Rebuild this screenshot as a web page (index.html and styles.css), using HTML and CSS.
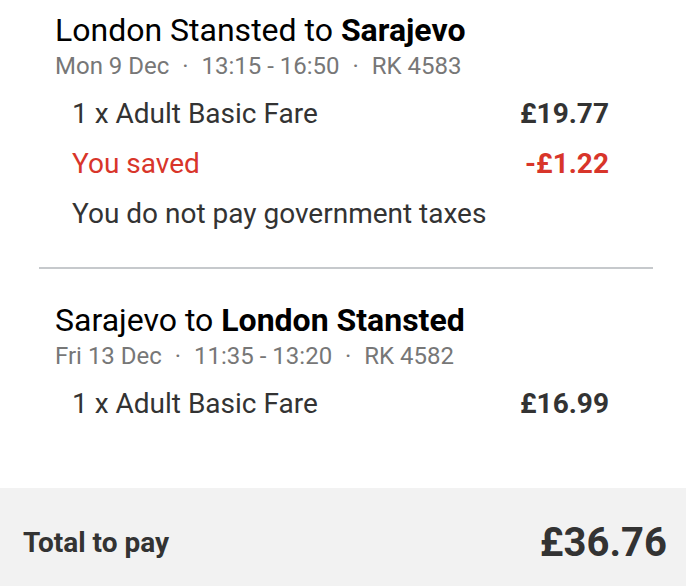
FILE: index.html
```html
<!DOCTYPE html>
<html>
<head>
<meta charset="utf-8">
<link rel="stylesheet" href="styles.css">
</head>
<body>
<div class="summary">
  <section class="trip trip-first">
    <h2 class="route">London Stansted to <b>Sarajevo</b></h2>
    <div class="meta">Mon 9 Dec <span class="dot">·</span> 13:15 - 16:50 <span class="dot">·</span> RK 4583</div>
    <div class="row"><span>1 x Adult Basic Fare</span><span class="price">£19.77</span></div>
    <div class="row saved"><span>You saved</span><span class="price">-£1.22</span></div>
    <div class="row"><span>You do not pay government taxes</span></div>
  </section>
  <hr class="divider">
  <section class="trip trip-second">
    <h2 class="route">Sarajevo to <b>London Stansted</b></h2>
    <div class="meta">Fri 13 Dec <span class="dot">·</span> 11:35 - 13:20 <span class="dot">·</span> RK 4582</div>
    <div class="row"><span>1 x Adult Basic Fare</span><span class="price">£16.99</span></div>
  </section>
</div>
<div class="total">
  <span class="total-label">Total to pay</span>
  <span class="total-amount">£36.76</span>
</div>
</body>
</html>
```
FILE: styles.css
```css
html, body {
  margin: 0;
  padding: 0;
  background: #fff;
  font-family: Roboto, "Noto Sans", sans-serif;
}
.summary {
  padding-top: 12px;
}
.trip {
  padding-left: 55px;
  padding-right: 77px;
}
.route {
  margin: 0;
  font-size: 32px;
  font-weight: 400;
  line-height: 36px;
  color: #000;
}
.route b {
  font-weight: 700;
}
.meta {
  font-size: 24px;
  line-height: 36px;
  color: #777;
  margin-bottom: 5px;
}
.dot {
  margin: 0 7px;
}
.row {
  display: flex;
  justify-content: space-between;
  padding-left: 17px;
  font-size: 28px;
  line-height: 50px;
  color: #333;
}
.price {
  font-weight: 700;
}
.saved {
  color: #d8352a;
}
.divider {
  border: 0;
  height: 2px;
  background: #c6c9cc;
  margin: 28px 33px 33px 39px;
}
.total {
  margin-top: 59px;
  background: #f2f2f2;
  padding: 30px 19px 0 23px;
  box-sizing: border-box;
  display: flex;
  justify-content: space-between;
  align-items: flex-start;
  height: 98px;
  color: #333;
}
.total-label {
  font-size: 28px;
  font-weight: 700;
  line-height: 50px;
}
.total-amount {
  font-size: 40px;
  font-weight: 700;
  line-height: 50px;
}
```
